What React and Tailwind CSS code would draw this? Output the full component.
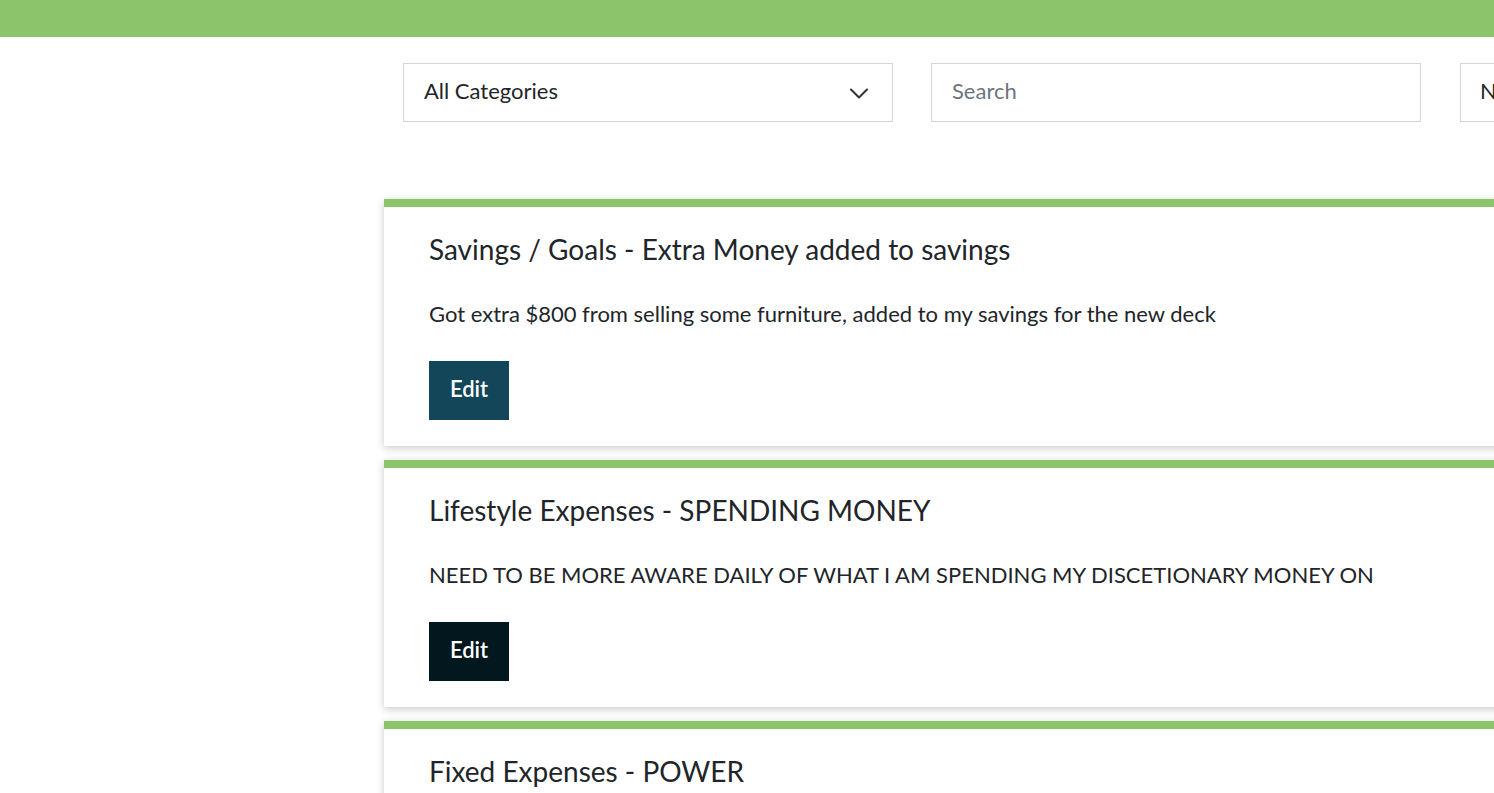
import React from 'react';

const ENTRIES = [
  {
    id: 1,
    title: 'Savings / Goals - Extra Money added to savings',
    note: 'Got extra $800 from selling some furniture, added to my savings for the new deck',
    button: 'bg-[#134659]',
  },
  {
    id: 2,
    title: 'Lifestyle Expenses - SPENDING MONEY',
    note: 'NEED TO BE MORE AWARE DAILY OF WHAT I AM SPENDING MY DISCETIONARY MONEY ON',
    button: 'bg-[#03171e]',
  },
  {
    id: 3,
    title: 'Fixed Expenses - POWER',
    note: 'Power bill came in higher than expected this month',
    button: 'bg-[#134659]',
  },
];

function Chevron() {
  return (
    <svg width="20" height="12" viewBox="0 0 20 12" fill="none">
      <path d="M2 2.5l8 8 8-8" stroke="#333" strokeWidth="2" strokeLinecap="round" strokeLinejoin="round" />
    </svg>
  );
}

export default function App() {
  return (
    <div className="h-[793px] w-[1494px] overflow-hidden bg-white text-[#212529] font-['Lato','Noto_Sans',sans-serif]">
      <div className="h-[37px] bg-[#8cc46b]" />

      <div className="ml-[403px] mt-[26px] flex w-[1600px] gap-[38px]">
        <div className="flex h-[59px] w-[490px] items-center justify-between border border-[#d4d4d4] pb-[5px] pl-[20px] pr-[23px] text-[22px]">
          <span>All Categories</span>
          <span className="pt-[5px]">
            <Chevron />
          </span>
        </div>
        <div className="flex h-[59px] w-[490px] items-center border border-[#d4d4d4] px-[20px] pb-[5px] text-[22px] text-[#6c757d]">
          Search
        </div>
        <div className="ml-px flex h-[59px] w-[490px] items-center border border-[#d4d4d4] px-[19px] pb-[5px] text-[22px]">
          Newest First
        </div>
      </div>

      <div className="ml-[384px] mt-[77px] flex w-[1200px] flex-col gap-[14px]">
        {ENTRIES.map((entry) => (
          <div
            key={entry.id}
            className="border-t-[8px] border-[#8cc46b] bg-white pl-[45px] pr-6 pt-[25px] pb-[26px] shadow-[0_2px_8px_rgba(0,0,0,0.22)]"
          >
            <h3 className="text-[28px] leading-[34px]">{entry.title}</h3>
            <p className="mt-[31px] text-[22px] leading-[33px]">{entry.note}</p>
            <button
              type="button"
              className={`mt-[31px] h-[59px] w-[80px] pb-[5px] text-[22px] font-semibold text-white ${entry.button}`}
            >
              Edit
            </button>
          </div>
        ))}
      </div>
    </div>
  );
}
